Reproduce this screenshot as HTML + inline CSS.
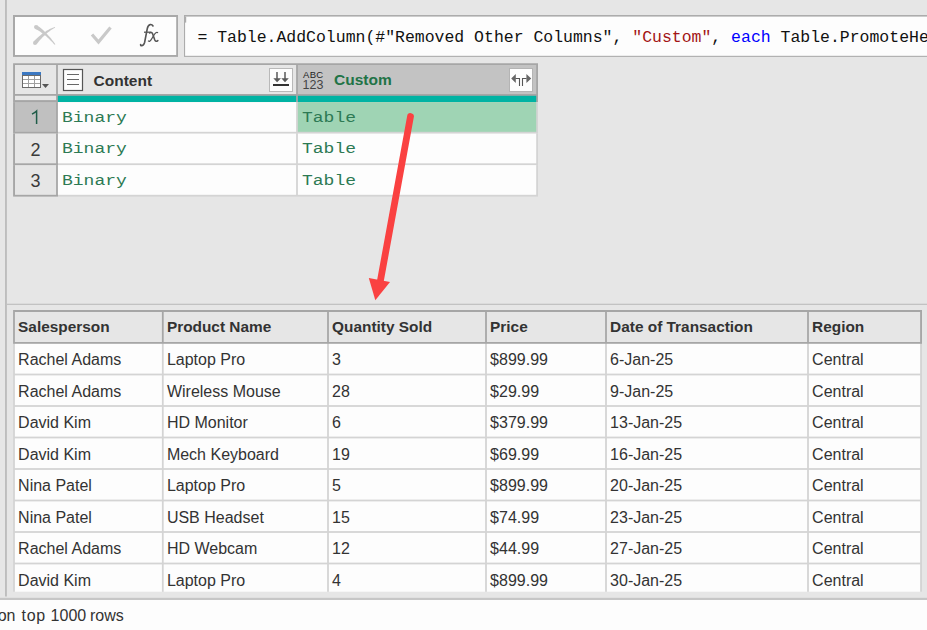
<!DOCTYPE html>
<html><head><meta charset="utf-8">
<style>
html,body{margin:0;padding:0;}
body{width:927px;height:630px;overflow:hidden;position:relative;background:#e6e6e6;font-family:"Liberation Sans",sans-serif;}
.abs{position:absolute;left:0;top:0;}
.t{position:absolute;white-space:nowrap;line-height:20px;}
.mono{font-family:"Liberation Mono",monospace;}
.bt{font-size:18px;color:#2d7a54;transform:scaleY(0.78);transform-origin:0 15.2px;}
</style></head><body>

<svg class="abs" width="927" height="630"><rect x="5.00" y="0.00" width="1.90" height="596.50" fill="#bdbdbd"/><rect x="13.00" y="15.00" width="165.00" height="41.90" fill="#a9a9a9"/><rect x="15.00" y="17.00" width="161.20" height="38.00" fill="#fdfdfd"/><rect x="184.00" y="15.00" width="746.00" height="41.90" fill="#acacac"/><rect x="185.10" y="16.60" width="744.90" height="39.20" fill="#fdfdfd"/><rect x="184.60" y="16.60" width="1.60" height="6.00" fill="#acacac"/><rect x="13.10" y="63.25" width="524.90" height="38.85" fill="#a6a6a6"/><rect x="15.00" y="65.00" width="41.10" height="29.00" fill="#e6e6e6"/><rect x="57.90" y="65.00" width="238.20" height="29.00" fill="#e6e6e6"/><rect x="297.90" y="65.00" width="238.30" height="29.00" fill="#c3c3c3"/><rect x="15.00" y="95.80" width="41.10" height="4.30" fill="#e6e6e6"/><rect x="57.90" y="95.80" width="238.20" height="6.30" fill="#00b3a3"/><rect x="297.90" y="95.80" width="238.30" height="6.30" fill="#00b3a3"/><rect x="13.10" y="102.10" width="45.00" height="31.50" fill="#a6a6a6"/><rect x="15.00" y="102.10" width="41.10" height="29.70" fill="#c0c0c0"/><rect x="58.10" y="102.10" width="479.90" height="31.50" fill="#d4d4d4"/><rect x="57.90" y="102.10" width="238.20" height="29.70" fill="#fdfdfd"/><rect x="297.90" y="102.10" width="238.30" height="29.70" fill="#9fd4b4"/><rect x="13.10" y="133.60" width="45.00" height="31.50" fill="#a6a6a6"/><rect x="15.00" y="133.60" width="41.10" height="29.70" fill="#e6e6e6"/><rect x="58.10" y="133.60" width="479.90" height="31.50" fill="#d4d4d4"/><rect x="57.90" y="133.60" width="238.20" height="29.70" fill="#fdfdfd"/><rect x="297.90" y="133.60" width="238.30" height="29.70" fill="#fdfdfd"/><rect x="13.10" y="165.10" width="45.00" height="31.50" fill="#a6a6a6"/><rect x="15.00" y="165.10" width="41.10" height="29.70" fill="#e6e6e6"/><rect x="58.10" y="165.10" width="479.90" height="31.50" fill="#d4d4d4"/><rect x="57.90" y="165.10" width="238.20" height="29.70" fill="#fdfdfd"/><rect x="297.90" y="165.10" width="238.30" height="29.70" fill="#fdfdfd"/><rect x="22" y="72" width="19" height="4" fill="#3b78c2"/><rect x="22.5" y="75.5" width="18" height="12" fill="#fff" stroke="#6a6a6a" stroke-width="1"/><path d="M28.5 76 V87 M34.5 76 V87 M23 79.5 H40 M23 83.5 H40" stroke="#a0a0a0" stroke-width="1" fill="none"/><path d="M42 84 H49 L45.5 88 Z" fill="#555"/><path d="M32 114.2 Q34.8 112.8 36.6 111 V124" stroke="#1f5c48" stroke-width="1.5" fill="none"/><rect x="63.5" y="69.5" width="19" height="21" fill="#fdfdfd" stroke="#555" stroke-width="1.2"/><path d="M67 74.5 H79 M67 79.5 H79 M67 84.5 H79" stroke="#666" stroke-width="1" fill="none"/><rect x="269.5" y="68.5" width="23" height="23" fill="#fdfdfd" stroke="#b9b9b9" stroke-width="1"/><path d="M277 72 V79 M285 72 V79" stroke="#5a5a5a" stroke-width="1.5" fill="none"/><path d="M273.3 78.2 H281 L277.1 82.2 Z M281.3 78.2 H288.8 L285 82.2 Z" fill="#5a5a5a"/><rect x="273" y="84" width="16" height="2" fill="#333"/><rect x="509.5" y="68.5" width="23" height="23" fill="#fdfdfd" stroke="#b4b4b4" stroke-width="1"/><path d="M511.2 78.5 L515.8 74 V83 Z M531.2 78.5 L526.4 74 V83 Z" fill="#666"/><path d="M515.5 78.5 H519.5 V86 M522.5 86 V78.5 H526.5" stroke="#555" stroke-width="1.1" fill="none"/><path d="M35.0 28.7 L36.2 29.4 L37.5 30.1 L38.7 30.8 L40.0 31.6 L41.2 32.5 L42.4 33.4 L43.7 34.3 L44.9 35.3 L46.2 36.3 L47.4 37.4 L48.6 38.5 L49.8 39.7 L51.0 40.9 L52.2 42.1 L53.4 43.4 L54.6 44.8 L55.4 44.2 L54.3 42.7 L53.2 41.3 L52.1 39.9 L51.1 38.5 L50.0 37.2 L48.8 35.9 L47.7 34.7 L46.6 33.5 L45.4 32.3 L44.3 31.2 L43.1 30.1 L41.9 29.1 L40.7 28.1 L39.5 27.1 L38.3 26.2 L37.0 25.3 Z M36.5 44.3 L37.7 42.9 L38.8 41.5 L40.0 40.1 L41.1 38.9 L42.3 37.6 L43.4 36.5 L44.6 35.4 L45.8 34.3 L46.9 33.3 L48.1 32.3 L49.3 31.4 L50.4 30.6 L51.6 29.8 L52.8 29.0 L54.0 28.3 L55.2 27.7 L54.8 26.9 L53.5 27.4 L52.2 27.9 L50.9 28.5 L49.6 29.1 L48.2 29.9 L46.9 30.6 L45.6 31.5 L44.2 32.4 L42.9 33.3 L41.6 34.3 L40.2 35.4 L38.9 36.5 L37.5 37.7 L36.2 39.0 L34.8 40.3 L33.5 41.7 Z" fill="#c9c9c9"/><circle cx="36" cy="27" r="2" fill="#c9c9c9"/><circle cx="35" cy="43" r="2" fill="#c9c9c9"/><path d="M92 34.5 L98.5 42 L110.5 27.5" stroke="#c9c9c9" stroke-width="3.2" fill="none"/><path d="M153 26 Q152 24.3 150.2 24.6 Q148 25 147.3 28.5 L144.6 42.5 Q143.8 45.6 141.5 45.6 Q140.5 45.6 140.6 44.6" stroke="#555" stroke-width="1.6" fill="none" stroke-linecap="round"/><path d="M144 32.2 H150.6" stroke="#555" stroke-width="1.3" fill="none"/><path d="M149.6 33 Q151.6 31.4 152.6 33.8 L154.8 40 Q155.8 42.3 157.8 40.6" stroke="#555" stroke-width="1.6" fill="none" stroke-linecap="round"/><path d="M157.6 32.6 Q156.4 31.8 154.8 33.8 L151.2 39.6 Q149.8 42 148.4 41" stroke="#555" stroke-width="1.2" fill="none" stroke-linecap="round"/><rect x="7.00" y="303.70" width="920.00" height="1.30" fill="#c2c2c2"/><rect x="13.10" y="310.00" width="908.90" height="33.90" fill="#a6a6a6"/><rect x="14.90" y="312.00" width="147.00" height="30.00" fill="#e6e6e6"/><rect x="163.70" y="312.00" width="163.40" height="30.00" fill="#e6e6e6"/><rect x="328.90" y="312.00" width="156.20" height="30.00" fill="#e6e6e6"/><rect x="486.90" y="312.00" width="118.20" height="30.00" fill="#e6e6e6"/><rect x="606.90" y="312.00" width="200.20" height="30.00" fill="#e6e6e6"/><rect x="808.90" y="312.00" width="111.20" height="30.00" fill="#e6e6e6"/><rect x="13.10" y="343.90" width="908.90" height="248.10" fill="#d4d4d4"/><rect x="14.90" y="343.90" width="147.00" height="29.70" fill="#fdfdfd"/><rect x="163.70" y="343.90" width="163.40" height="29.70" fill="#fdfdfd"/><rect x="328.90" y="343.90" width="156.20" height="29.70" fill="#fdfdfd"/><rect x="486.90" y="343.90" width="118.20" height="29.70" fill="#fdfdfd"/><rect x="606.90" y="343.90" width="200.20" height="29.70" fill="#fdfdfd"/><rect x="808.90" y="343.90" width="111.20" height="29.70" fill="#fdfdfd"/><rect x="14.90" y="375.40" width="147.00" height="29.70" fill="#fdfdfd"/><rect x="163.70" y="375.40" width="163.40" height="29.70" fill="#fdfdfd"/><rect x="328.90" y="375.40" width="156.20" height="29.70" fill="#fdfdfd"/><rect x="486.90" y="375.40" width="118.20" height="29.70" fill="#fdfdfd"/><rect x="606.90" y="375.40" width="200.20" height="29.70" fill="#fdfdfd"/><rect x="808.90" y="375.40" width="111.20" height="29.70" fill="#fdfdfd"/><rect x="14.90" y="406.90" width="147.00" height="29.70" fill="#fdfdfd"/><rect x="163.70" y="406.90" width="163.40" height="29.70" fill="#fdfdfd"/><rect x="328.90" y="406.90" width="156.20" height="29.70" fill="#fdfdfd"/><rect x="486.90" y="406.90" width="118.20" height="29.70" fill="#fdfdfd"/><rect x="606.90" y="406.90" width="200.20" height="29.70" fill="#fdfdfd"/><rect x="808.90" y="406.90" width="111.20" height="29.70" fill="#fdfdfd"/><rect x="14.90" y="438.40" width="147.00" height="29.70" fill="#fdfdfd"/><rect x="163.70" y="438.40" width="163.40" height="29.70" fill="#fdfdfd"/><rect x="328.90" y="438.40" width="156.20" height="29.70" fill="#fdfdfd"/><rect x="486.90" y="438.40" width="118.20" height="29.70" fill="#fdfdfd"/><rect x="606.90" y="438.40" width="200.20" height="29.70" fill="#fdfdfd"/><rect x="808.90" y="438.40" width="111.20" height="29.70" fill="#fdfdfd"/><rect x="14.90" y="469.90" width="147.00" height="29.70" fill="#fdfdfd"/><rect x="163.70" y="469.90" width="163.40" height="29.70" fill="#fdfdfd"/><rect x="328.90" y="469.90" width="156.20" height="29.70" fill="#fdfdfd"/><rect x="486.90" y="469.90" width="118.20" height="29.70" fill="#fdfdfd"/><rect x="606.90" y="469.90" width="200.20" height="29.70" fill="#fdfdfd"/><rect x="808.90" y="469.90" width="111.20" height="29.70" fill="#fdfdfd"/><rect x="14.90" y="501.40" width="147.00" height="29.70" fill="#fdfdfd"/><rect x="163.70" y="501.40" width="163.40" height="29.70" fill="#fdfdfd"/><rect x="328.90" y="501.40" width="156.20" height="29.70" fill="#fdfdfd"/><rect x="486.90" y="501.40" width="118.20" height="29.70" fill="#fdfdfd"/><rect x="606.90" y="501.40" width="200.20" height="29.70" fill="#fdfdfd"/><rect x="808.90" y="501.40" width="111.20" height="29.70" fill="#fdfdfd"/><rect x="14.90" y="532.90" width="147.00" height="29.70" fill="#fdfdfd"/><rect x="163.70" y="532.90" width="163.40" height="29.70" fill="#fdfdfd"/><rect x="328.90" y="532.90" width="156.20" height="29.70" fill="#fdfdfd"/><rect x="486.90" y="532.90" width="118.20" height="29.70" fill="#fdfdfd"/><rect x="606.90" y="532.90" width="200.20" height="29.70" fill="#fdfdfd"/><rect x="808.90" y="532.90" width="111.20" height="29.70" fill="#fdfdfd"/><rect x="14.90" y="564.40" width="147.00" height="27.60" fill="#fdfdfd"/><rect x="163.70" y="564.40" width="163.40" height="27.60" fill="#fdfdfd"/><rect x="328.90" y="564.40" width="156.20" height="27.60" fill="#fdfdfd"/><rect x="486.90" y="564.40" width="118.20" height="27.60" fill="#fdfdfd"/><rect x="606.90" y="564.40" width="200.20" height="27.60" fill="#fdfdfd"/><rect x="808.90" y="564.40" width="111.20" height="27.60" fill="#fdfdfd"/><rect x="7.00" y="591.70" width="920.00" height="6.10" fill="#e6e6e6"/><rect x="0.00" y="597.80" width="927.00" height="2.20" fill="#c6c6c6"/><rect x="0.00" y="600.00" width="927.00" height="30.00" fill="#fdfdfd"/></svg>
<div class="t mono" style="left:197.4px;top:27.5px;font-size:16.48px;color:#111">= Table.AddColumn(#"Removed Other Columns", <span style="color:#a31515">"Custom"</span>, <span style="color:#0000ff">each</span> Table.PromoteHeaders([Content]))</div>
<div class="t" style="left:303px;top:68.5px;font-size:9.5px;color:#222;line-height:12px;letter-spacing:0.3px">ABC</div>
<div class="t" style="left:302.5px;top:77.9px;font-size:12.5px;color:#444;line-height:14px">123</div>
<div class="t" style="left:93.5px;top:70.5px;font-size:15.5px;font-weight:bold;color:#333">Content</div>
<div class="t" style="left:334px;top:70px;font-size:15.5px;font-weight:bold;color:#217346">Custom</div>
<div class="t mono bt" style="left:62px;top:106.7px">Binary</div>
<div class="t mono bt" style="left:302px;top:106.7px">Table</div>
<div class="t" style="left:30.5px;top:139.6px;font-size:18px;color:#3a3a3a">2</div>
<div class="t mono bt" style="left:62px;top:138.2px">Binary</div>
<div class="t mono bt" style="left:302px;top:138.2px">Table</div>
<div class="t" style="left:30.5px;top:171.1px;font-size:18px;color:#3a3a3a">3</div>
<div class="t mono bt" style="left:62px;top:169.7px">Binary</div>
<div class="t mono bt" style="left:302px;top:169.7px">Table</div>
<div class="t" style="left:18.1px;top:316.7px;font-size:15.4px;font-weight:bold;color:#333">Salesperson</div>
<div class="t" style="left:166.9px;top:316.7px;font-size:15.4px;font-weight:bold;color:#333">Product Name</div>
<div class="t" style="left:332.1px;top:316.7px;font-size:15.4px;font-weight:bold;color:#333">Quantity Sold</div>
<div class="t" style="left:490.1px;top:316.7px;font-size:15.4px;font-weight:bold;color:#333">Price</div>
<div class="t" style="left:610.1px;top:316.7px;font-size:15.4px;font-weight:bold;color:#333">Date of Transaction</div>
<div class="t" style="left:812.1px;top:316.7px;font-size:15.4px;font-weight:bold;color:#333">Region</div>
<div style="position:absolute;left:0;top:0;width:927px;height:592px;overflow:hidden">
<div class="t" style="left:18.1px;top:350.2px;font-size:16px;color:#333">Rachel Adams</div>
<div class="t" style="left:166.9px;top:350.2px;font-size:16px;color:#333">Laptop Pro</div>
<div class="t" style="left:332.1px;top:350.2px;font-size:16px;color:#333">3</div>
<div class="t" style="left:490.1px;top:350.2px;font-size:16px;color:#333">$899.99</div>
<div class="t" style="left:610.1px;top:350.2px;font-size:16px;color:#333">6-Jan-25</div>
<div class="t" style="left:812.1px;top:350.2px;font-size:16px;color:#333">Central</div>
<div class="t" style="left:18.1px;top:381.7px;font-size:16px;color:#333">Rachel Adams</div>
<div class="t" style="left:166.9px;top:381.7px;font-size:16px;color:#333">Wireless Mouse</div>
<div class="t" style="left:332.1px;top:381.7px;font-size:16px;color:#333">28</div>
<div class="t" style="left:490.1px;top:381.7px;font-size:16px;color:#333">$29.99</div>
<div class="t" style="left:610.1px;top:381.7px;font-size:16px;color:#333">9-Jan-25</div>
<div class="t" style="left:812.1px;top:381.7px;font-size:16px;color:#333">Central</div>
<div class="t" style="left:18.1px;top:413.2px;font-size:16px;color:#333">David Kim</div>
<div class="t" style="left:166.9px;top:413.2px;font-size:16px;color:#333">HD Monitor</div>
<div class="t" style="left:332.1px;top:413.2px;font-size:16px;color:#333">6</div>
<div class="t" style="left:490.1px;top:413.2px;font-size:16px;color:#333">$379.99</div>
<div class="t" style="left:610.1px;top:413.2px;font-size:16px;color:#333">13-Jan-25</div>
<div class="t" style="left:812.1px;top:413.2px;font-size:16px;color:#333">Central</div>
<div class="t" style="left:18.1px;top:444.7px;font-size:16px;color:#333">David Kim</div>
<div class="t" style="left:166.9px;top:444.7px;font-size:16px;color:#333">Mech Keyboard</div>
<div class="t" style="left:332.1px;top:444.7px;font-size:16px;color:#333">19</div>
<div class="t" style="left:490.1px;top:444.7px;font-size:16px;color:#333">$69.99</div>
<div class="t" style="left:610.1px;top:444.7px;font-size:16px;color:#333">16-Jan-25</div>
<div class="t" style="left:812.1px;top:444.7px;font-size:16px;color:#333">Central</div>
<div class="t" style="left:18.1px;top:476.2px;font-size:16px;color:#333">Nina Patel</div>
<div class="t" style="left:166.9px;top:476.2px;font-size:16px;color:#333">Laptop Pro</div>
<div class="t" style="left:332.1px;top:476.2px;font-size:16px;color:#333">5</div>
<div class="t" style="left:490.1px;top:476.2px;font-size:16px;color:#333">$899.99</div>
<div class="t" style="left:610.1px;top:476.2px;font-size:16px;color:#333">20-Jan-25</div>
<div class="t" style="left:812.1px;top:476.2px;font-size:16px;color:#333">Central</div>
<div class="t" style="left:18.1px;top:507.7px;font-size:16px;color:#333">Nina Patel</div>
<div class="t" style="left:166.9px;top:507.7px;font-size:16px;color:#333">USB Headset</div>
<div class="t" style="left:332.1px;top:507.7px;font-size:16px;color:#333">15</div>
<div class="t" style="left:490.1px;top:507.7px;font-size:16px;color:#333">$74.99</div>
<div class="t" style="left:610.1px;top:507.7px;font-size:16px;color:#333">23-Jan-25</div>
<div class="t" style="left:812.1px;top:507.7px;font-size:16px;color:#333">Central</div>
<div class="t" style="left:18.1px;top:539.2px;font-size:16px;color:#333">Rachel Adams</div>
<div class="t" style="left:166.9px;top:539.2px;font-size:16px;color:#333">HD Webcam</div>
<div class="t" style="left:332.1px;top:539.2px;font-size:16px;color:#333">12</div>
<div class="t" style="left:490.1px;top:539.2px;font-size:16px;color:#333">$44.99</div>
<div class="t" style="left:610.1px;top:539.2px;font-size:16px;color:#333">27-Jan-25</div>
<div class="t" style="left:812.1px;top:539.2px;font-size:16px;color:#333">Central</div>
<div class="t" style="left:18.1px;top:570.7px;font-size:16px;color:#333">David Kim</div>
<div class="t" style="left:166.9px;top:570.7px;font-size:16px;color:#333">Laptop Pro</div>
<div class="t" style="left:332.1px;top:570.7px;font-size:16px;color:#333">4</div>
<div class="t" style="left:490.1px;top:570.7px;font-size:16px;color:#333">$899.99</div>
<div class="t" style="left:610.1px;top:570.7px;font-size:16px;color:#333">30-Jan-25</div>
<div class="t" style="left:812.1px;top:570.7px;font-size:16px;color:#333">Central</div>
</div>
<div class="t" style="right:911.5px;top:605.8px;font-size:16px;color:#333">Column profiling based on</div>
<div class="t" style="left:21.6px;top:605.8px;font-size:16px;letter-spacing:0.7px;color:#333">top</div>
<div class="t" style="left:50.6px;top:605.8px;font-size:16px;color:#333">1000</div>
<div class="t" style="left:90px;top:605.8px;font-size:16px;color:#333">rows</div>
<svg class="abs" width="927" height="630"><line x1="410.5" y1="116.5" x2="380" y2="283" stroke="#fa4141" stroke-width="6.8" stroke-linecap="round"/><path d="M368.8 278 L390 282 L375.3 300.2 Z" fill="#fa4141"/></svg>
</body></html>
